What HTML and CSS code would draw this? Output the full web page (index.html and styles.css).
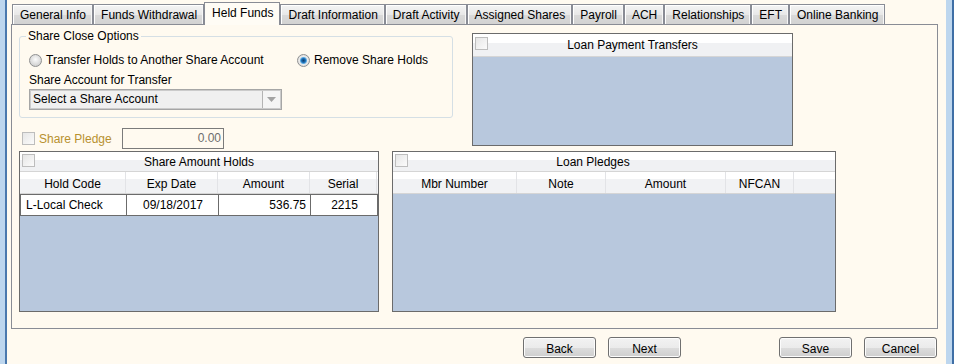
FILE: index.html
```html
<!DOCTYPE html>
<html lang="en">
<head>
    <meta charset="UTF-8">
    <meta name="viewport" content="width=device-width, initial-scale=1.0">
    <title>Held Funds - Share Close</title>
    <link rel="stylesheet" href="styles.css">
</head>
<body>

    <div class="window">
        <div class="edge-left"></div>

        <div class="main">
            <div class="tabs">
                <div class="tab">General Info</div>
                <div class="tab">Funds Withdrawal</div>
                <div class="tab active">Held Funds</div>
                <div class="tab">Draft Information</div>
                <div class="tab">Draft Activity</div>
                <div class="tab">Assigned Shares</div>
                <div class="tab">Payroll</div>
                <div class="tab">ACH</div>
                <div class="tab">Relationships</div>
                <div class="tab">EFT</div>
                <div class="tab">Online Banking</div>
            </div>

            <div class="panel">
                <div class="top-row">
                    <div class="left-col">
                        <fieldset class="group">
                            <legend>Share Close Options</legend>
                            <div class="group-body">
                                <div class="radio-row">
                                    <label class="radio-item first"><span class="radio"></span>Transfer Holds to Another Share Account</label>
                                    <label class="radio-item"><span class="radio checked"></span>Remove Share Holds</label>
                                </div>
                                <div class="field-label">Share Account for Transfer</div>
                                <div class="combo">
                                    <span class="combo-text">Select a Share Account</span>
                                    <span class="combo-btn">
                                        <svg width="9" height="5" viewBox="0 0 9 5"><path d="M0 0h9L4.5 5z" fill="#a3a3a3"/></svg>
                                    </span>
                                </div>
                            </div>
                        </fieldset>

                        <div class="pledge-row">
                            <span class="check"></span>
                            <span class="pledge-label">Share Pledge</span>
                            <div class="amount-box">0.00</div>
                        </div>
                    </div>

                    <div class="grid grid-transfers">
                        <div class="grid-title">
                            <span class="check"></span>
                            <span class="title-text">Loan Payment Transfers</span>
                        </div>
                    </div>
                </div>

                <div class="bottom-row">
                    <div class="grid grid-holds">
                        <div class="grid-title">
                            <span class="check"></span>
                            <span class="title-text">Share Amount Holds</span>
                        </div>
                        <div class="grid-head">
                            <div class="hcell">Hold Code</div>
                            <div class="hcell">Exp Date</div>
                            <div class="hcell">Amount</div>
                            <div class="hcell">Serial</div>
                            <div class="hcell"></div>
                        </div>
                        <div class="grid-row">
                            <div class="cell">L-Local Check</div>
                            <div class="cell center">09/18/2017</div>
                            <div class="cell right">536.75</div>
                            <div class="cell center">2215</div>
                        </div>
                    </div>

                    <div class="grid grid-pledges">
                        <div class="grid-title">
                            <span class="check"></span>
                            <span class="title-text">Loan Pledges</span>
                        </div>
                        <div class="grid-head">
                            <div class="hcell">Mbr Number</div>
                            <div class="hcell">Note</div>
                            <div class="hcell">Amount</div>
                            <div class="hcell">NFCAN</div>
                            <div class="hcell"></div>
                        </div>
                    </div>
                </div>
            </div>

            <div class="actions">
                <button>Back</button>
                <button>Next</button>
                <button class="save">Save</button>
                <button>Cancel</button>
            </div>
        </div>

        <div class="edge-right"></div>
    </div>

</body>
</html>
```

FILE: styles.css
```css
body {
    margin: 0;
    font-family: "Liberation Sans", Arial, sans-serif;
    font-size: 12px;
    color: #000;
    background-color: #fffaf0;
}

.window {
    display: flex;
    height: 364px;
    overflow: hidden;
}

.edge-left {
    width: 5px;
    background-color: #bdd6ee;
    border-right: 2px solid #4a78ad;
}

.edge-right {
    width: 6px;
    background-color: #bdd6ee;
    border-right: 2px solid #3f6fa6;
}

.main {
    flex: 1;
    padding: 2px 8px 0 4px;
}

/* tabs */

.tabs {
    display: flex;
    align-items: flex-end;
    height: 22px;
    padding-left: 1px;
}

.tab {
    height: 20px;
    box-sizing: border-box;
    padding: 2px 6px 0 7px;
    border: 1px solid #898c95;
    border-bottom: none;
    background: linear-gradient(#f4f4f4, #e8e8e8 50%, #dadada 51%, #d2d2d2);
    box-shadow: inset 1px 1px 0 #fff, inset -1px 0 0 #f6f6f6;
    line-height: 16px;
    white-space: nowrap;
}

.tab.active {
    position: relative;
    height: 23px;
    margin-bottom: -1px;
    padding-top: 2px;
    background: #fffcf5;
    box-shadow: none;
}

.panel {
    height: 305px;
    box-sizing: border-box;
    border: 1px solid #898c95;
    padding: 4px 7px 0;
}

/* top section */

.top-row {
    display: flex;
    align-items: flex-start;
}

.left-col {
    width: 434px;
}

.group {
    margin: 0;
    padding: 0;
    min-width: 0;
    border: 1px solid #d5dfe5;
    border-radius: 3px;
}

.group legend {
    margin-left: 6px;
    padding: 0 2px;
    line-height: 14px;
}

.group-body {
    padding: 9px 0 7px 9px;
}

.radio-row {
    display: flex;
    align-items: center;
    height: 16px;
}

.radio-item {
    display: flex;
    align-items: center;
}

.radio-item.first {
    width: 268px;
}

.radio {
    width: 13px;
    height: 13px;
    box-sizing: border-box;
    margin-right: 4px;
    border: 1px solid #8f9090;
    border-radius: 50%;
    background: radial-gradient(circle at 50% 40%, #fbfbfb 0, #e2e2e2 45%, #c4c4c4 100%);
}

.radio.checked {
    background: radial-gradient(circle at 50% 50%, #0e3d6c 0, #1d6db3 2px, #5aa9e2 3px, #eaeaea 4px, #d6d6d6 100%);
}

.field-label {
    margin-top: 5px;
    line-height: 14px;
}

.combo {
    display: flex;
    width: 253px;
    height: 21px;
    box-sizing: border-box;
    margin-top: 2px;
    border: 1px solid #a6a6a6;
    box-shadow: inset 0 0 0 1px #cbcbcb;
    background-color: #f0f0f0;
}

.combo-text {
    flex: 1;
    padding-left: 3px;
    line-height: 19px;
}

.combo-btn {
    display: flex;
    align-items: center;
    justify-content: center;
    width: 17px;
    margin: 1px 1px 1px 0;
    border-left: 1px solid #b4b4b4;
    background-color: #f5f5f5;
}

.pledge-row {
    display: flex;
    align-items: center;
    height: 21px;
    margin-top: 10px;
}

.pledge-row .check {
    margin-left: 3px;
}

.pledge-label {
    width: 87px;
    padding-left: 4px;
    box-sizing: border-box;
    color: #b8912f;
}

.amount-box {
    width: 102px;
    height: 21px;
    box-sizing: border-box;
    padding-right: 2px;
    border: 1px solid #7b7b7b;
    color: #6d6d6d;
    text-align: right;
    line-height: 19px;
}

.check {
    width: 13px;
    height: 13px;
    box-sizing: border-box;
    border: 1px solid #bdbdbd;
    background: linear-gradient(135deg, #e6e6e6, #fbfbfb);
}

/* grids */

.grid {
    box-sizing: border-box;
    border: 1px solid #6b6b6b;
    background-color: #b8c8dd;
}

.grid-transfers {
    width: 321px;
    height: 113px;
    margin: 4px 0 0 19px;
}

.bottom-row {
    display: flex;
    gap: 13px;
    margin-top: 2px;
}

.grid-holds {
    width: 360px;
    height: 161px;
}

.grid-pledges {
    width: 444px;
    height: 161px;
}

.grid-title {
    display: grid;
    height: 20px;
    box-sizing: border-box;
    padding-top: 3px;
    border-bottom: 1px solid #d5d5d5;
    background: linear-gradient(#ffffff 0, #ffffff 40%, #f0f1f3 40%, #f0f1f3 100%);
}

.grid-title > * {
    grid-area: 1 / 1;
}

.grid-title .check {
    justify-self: start;
    align-self: start;
    margin: -1px 0 0 2px;
}

.title-text {
    justify-self: center;
    line-height: 14px;
}

.grid-transfers .grid-title {
    height: 23px;
    padding-top: 4px;
}

.grid-pledges .title-text {
    justify-self: start;
    width: 400px;
    text-align: center;
}

.grid-head {
    display: grid;
    height: 18px;
    padding-top: 3px;
    border-bottom: 1px solid #d5d5d5;
    background: linear-gradient(#ffffff 0, #ffffff 35%, #f1f2f4 35%, #f1f2f4 100%);
}

.grid-holds .grid-head {
    grid-template-columns: 106px 92px 92px 67px 1fr;
}

.grid-pledges .grid-head {
    grid-template-columns: 124px 89px 120px 68px 1fr;
}

.hcell {
    margin-top: -3px;
    padding-top: 5px;
    box-sizing: border-box;
    border-right: 1px solid #e2e3e6;
    text-align: center;
    line-height: 15px;
}

.hcell:last-child {
    border-right: none;
}

.grid-row {
    display: grid;
    grid-template-columns: 107px 92px 92px 1fr;
    height: 22px;
    box-sizing: border-box;
    border-top: 1px solid #6b6b6b;
    border-bottom: 1px solid #6b6b6b;
    background-color: #fff;
}

.cell {
    padding: 0 4px 0 5px;
    border-right: 1px solid #6b6b6b;
    line-height: 20px;
    white-space: nowrap;
}

.cell:first-child {
    border-left: 1px solid #6b6b6b;
}

.cell.center {
    text-align: center;
}

.cell.right {
    text-align: right;
}

/* buttons */

.actions {
    display: flex;
    justify-content: flex-end;
    gap: 12px;
    margin-top: 8px;
    padding-right: 1px;
}

.actions button {
    width: 73px;
    height: 21px;
    padding: 2px 0 0;
    border: 1px solid #707070;
    border-radius: 3px;
    background: linear-gradient(#f2f2f2, #ebebeb 50%, #dddddd 51%, #cfcfcf);
    box-shadow: inset 0 0 0 1px #fcfcfc;
    font-family: "Liberation Sans", Arial, sans-serif;
    font-size: 12px;
    color: #000;
}

.actions .save {
    margin-left: 86px;
}
```
